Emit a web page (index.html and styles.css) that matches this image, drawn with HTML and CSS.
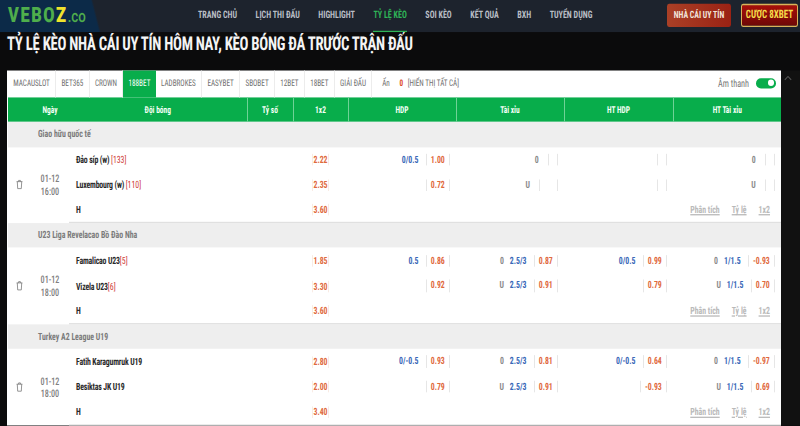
FILE: index.html
```html
<!DOCTYPE html>
<html lang="vi">
<head>
<meta charset="utf-8">
<title>Tỷ lệ kèo</title>
<link rel="stylesheet" href="styles.css">
</head>
<body>
<div class="stage">
<header class="topbar">
  <div class="logo"><span class="logo-main">VEBO</span><span class="logo-z">Z</span><span class="logo-co">.co</span></div>
  <nav class="nav">
    <a>TRANG CHỦ</a><a>LỊCH THI ĐẤU</a><a>HIGHLIGHT</a><a class="on">TỶ LỆ KÈO</a><a>SOI KÈO</a><a>KẾT QUẢ</a><a>BXH</a><a>TUYỂN DỤNG</a>
  </nav>
  <div class="cta">
    <a class="btn btn-a">NHÀ CÁI UY TÍN</a>
    <a class="btn btn-b">CƯỢC 8XBET</a>
  </div>
</header>
<main class="page">
  <h1 class="title">TỶ LỆ KÈO NHÀ CÁI UY TÍN HÔM NAY, KÈO BÓNG ĐÁ TRƯỚC TRẬN ĐẤU</h1>
  <div class="body-row">
    <section class="panel">
      <div class="tabs">
        <a class="tab">MACAUSLOT</a><a class="tab">BET365</a><a class="tab">CROWN</a><a class="tab active">188BET</a><a class="tab">LADBROKES</a><a class="tab">EASYBET</a><a class="tab">SBOBET</a><a class="tab">12BET</a><a class="tab">18BET</a><a class="tab">GIẢI ĐẤU</a>
        <span class="hidden-count">Ẩn <b>0</b> [HIỂN THỊ TẤT CẢ]</span>
        <span class="sound">Âm thanh</span>
        <span class="toggle"><i></i></span>
      </div>
      <table class="odds">
        <colgroup>
          <col class="c-trash"><col class="c-date"><col class="c-team"><col class="c-score"><col class="c-x"><col class="c-g"><col class="c-g"><col class="c-g2"><col class="c-g">
        </colgroup>
        <thead>
          <tr><th></th><th>Ngày</th><th class="sep">Đội bóng</th><th class="sep">Tỷ số</th><th class="sep">1x2</th><th class="sep">HDP</th><th class="sep">Tài xỉu</th><th class="sep">HT HDP</th><th>HT Tài xỉu</th></tr>
        </thead>
        <tbody>
          <tr class="league"><td colspan="9">Giao hữu quốc tế</td></tr>
          <tr>
            <td rowspan="3" class="trash"><svg class="ico" viewBox="0 0 12 14" preserveAspectRatio="none"><path d="M1 3h10M4.5 3V1.2h3V3M2.2 3l.7 9.8h6.2l.7-9.8" fill="none" stroke="#777" stroke-width="1.2"/></svg></td>
            <td rowspan="3" class="date">01-12<br>16:00</td>
            <td class="team">Đảo síp (w) <em>[133]</em></td><td></td><td class="x"><span>2.22</span></td>
            <td><div class="o"><span class="l">0/0.5</span><span class="v">1.00</span></div></td>
            <td><div class="o"><span class="k">0</span><span class="l"></span><span class="v"></span></div></td>
            <td><div class="o"><span class="v e"></span></div></td>
            <td><div class="o"><span class="k">0</span><span class="l"></span><span class="v"></span></div></td>
          </tr>
          <tr>
            <td class="team">Luxembourg (w) <em>[110]</em></td><td></td><td class="x"><span>2.35</span></td>
            <td><div class="o"><span class="v">0.72</span></div></td>
            <td><div class="o"><span class="k">U</span><span class="l"></span><span class="v w"></span></div></td>
            <td><div class="o"><span class="v e"></span></div></td>
            <td><div class="o"><span class="k">U</span><span class="l"></span><span class="v"></span></div></td>
          </tr>
          <tr class="last">
            <td class="team">H</td><td></td><td class="x"><span>3.60</span></td><td></td>
            <td colspan="3" class="links"><a>Phân tích</a><a>Tỷ lệ</a><a>1x2</a></td>
          </tr>
          <tr class="league"><td colspan="9">U23 Liga Revelacao Bồ Đào Nha</td></tr>
          <tr>
            <td rowspan="3" class="trash"><svg class="ico" viewBox="0 0 12 14" preserveAspectRatio="none"><path d="M1 3h10M4.5 3V1.2h3V3M2.2 3l.7 9.8h6.2l.7-9.8" fill="none" stroke="#777" stroke-width="1.2"/></svg></td>
            <td rowspan="3" class="date">01-12<br>18:00</td>
            <td class="team">Famalicao U23<em>[5]</em></td><td></td><td class="x"><span>1.85</span></td>
            <td><div class="o"><span class="l">0.5</span><span class="v">0.86</span></div></td>
            <td><div class="o"><span class="k">0</span><span class="l">2.5/3</span><span class="v">0.87</span></div></td>
            <td><div class="o"><span class="l">0/0.5</span><span class="v">0.99</span></div></td>
            <td><div class="o"><span class="k">0</span><span class="l">1/1.5</span><span class="v">-0.93</span></div></td>
          </tr>
          <tr>
            <td class="team">Vizela U23<em>[6]</em></td><td></td><td class="x"><span>3.30</span></td>
            <td><div class="o"><span class="v">0.92</span></div></td>
            <td><div class="o"><span class="k">U</span><span class="l">2.5/3</span><span class="v">0.91</span></div></td>
            <td><div class="o"><span class="v">0.79</span></div></td>
            <td><div class="o"><span class="k">U</span><span class="l">1/1.5</span><span class="v">0.70</span></div></td>
          </tr>
          <tr class="last">
            <td class="team">H</td><td></td><td class="x"><span>3.60</span></td><td></td>
            <td colspan="3" class="links"><a>Phân tích</a><a>Tỷ lệ</a><a>1x2</a></td>
          </tr>
          <tr class="league"><td colspan="9">Turkey A2 League U19</td></tr>
          <tr>
            <td rowspan="3" class="trash"><svg class="ico" viewBox="0 0 12 14" preserveAspectRatio="none"><path d="M1 3h10M4.5 3V1.2h3V3M2.2 3l.7 9.8h6.2l.7-9.8" fill="none" stroke="#777" stroke-width="1.2"/></svg></td>
            <td rowspan="3" class="date">01-12<br>18:00</td>
            <td class="team">Fatih Karagumruk U19</td><td></td><td class="x"><span>2.80</span></td>
            <td><div class="o"><span class="l">0/-0.5</span><span class="v">0.93</span></div></td>
            <td><div class="o"><span class="k">0</span><span class="l">2.5/3</span><span class="v">0.81</span></div></td>
            <td><div class="o"><span class="l">0/-0.5</span><span class="v">0.64</span></div></td>
            <td><div class="o"><span class="k">0</span><span class="l">1/1.5</span><span class="v">-0.97</span></div></td>
          </tr>
          <tr>
            <td class="team">Besiktas JK U19</td><td></td><td class="x"><span>2.00</span></td>
            <td><div class="o"><span class="v">0.79</span></div></td>
            <td><div class="o"><span class="k">U</span><span class="l">2.5/3</span><span class="v">0.91</span></div></td>
            <td><div class="o"><span class="v">-0.93</span></div></td>
            <td><div class="o"><span class="k">U</span><span class="l">1/1.5</span><span class="v">0.69</span></div></td>
          </tr>
          <tr class="last">
            <td class="team">H</td><td></td><td class="x"><span>3.40</span></td><td></td>
            <td colspan="3" class="links"><a>Phân tích</a><a>Tỷ lệ</a><a>1x2</a></td>
          </tr>
        </tbody>
      </table>
    </section>
    <div class="scroll"><svg class="chev" viewBox="0 0 10 6" preserveAspectRatio="none"><path d="M1 5l4-4 4 4" fill="none" stroke="#555" stroke-width="1.3"/></svg></div>
  </div>
</main>
</div>
</body>
</html>
```
FILE: styles.css
```css
/* The site's typeface is far narrower than any installed family, so the page is
   laid out shorter with small type and stretched upward once.
   --v is one final vertical pixel. */
:root { --v: .78px; }
* { box-sizing: border-box; }
html, body { margin: 0; height: 100%; overflow: hidden; }
body { background: #0b0b0c; font-family: "Roboto", sans-serif; font-stretch: 75%; color: #222; text-rendering: geometricPrecision; }
.stage { width: 800px; height: calc(var(--v) * 426); overflow: hidden; transform: scaleY(1.28205); transform-origin: 0 0; display: flex; flex-direction: column; }

.topbar { flex: none; height: calc(var(--v) * 32); display: flex; align-items: stretch; background: linear-gradient(72deg, #0c2a48 0, #0c2a48 94px, #1d232d 96px, #1d232d 100%); }
.logo { width: 198px; padding: calc(var(--v) * 3) 0 0 8px; font-size: calc(var(--v) * 21); line-height: calc(var(--v) * 25); font-weight: 900; font-stretch: 100%; letter-spacing: 1.6px; white-space: nowrap; }
.logo-main { color: #4fae4c; }
.logo-z { color: #efe32c; }
.logo-co { color: #4fae4c; font-weight: 500; font-size: calc(var(--v) * 17); letter-spacing: 0; }
.nav { display: flex; gap: 18.5px; }
.nav a { height: calc(var(--v) * 32); line-height: calc(var(--v) * 30); font-size: calc(var(--v) * 10.3); color: #b9bec5; font-weight: 700; white-space: nowrap; }
.nav a.on { color: #2fb457; border-bottom: calc(var(--v) * 2) solid #2fb457; }
.cta { margin-left: auto; display: flex; gap: 10px; padding: calc(var(--v) * 4) 2px calc(var(--v) * 5) 0; }
.btn { display: block; height: calc(var(--v) * 23); line-height: calc(var(--v) * 23); text-align: center; font-size: calc(var(--v) * 10); font-weight: 700; border-radius: 2px; white-space: nowrap; }
.btn-a { width: 64px; color: #f2e6dc; background: linear-gradient(90deg, #aa4026, #9a2214); }
.btn-b { width: 57px; line-height: calc(var(--v) * 21.4); font-size: calc(var(--v) * 11.5); color: #f5dc4a; background: linear-gradient(#a80f0a, #6e0806); border: 1px solid #d9b35a; }

.page { flex: 1; display: flex; flex-direction: column; min-height: 0; padding-left: 7px; }
.title { flex: none; margin: 0; height: calc(var(--v) * 39); padding-top: calc(var(--v) * 1); font-size: calc(var(--v) * 19); line-height: calc(var(--v) * 21); font-weight: 700; color: #f4f4f4; letter-spacing: -.29px; white-space: nowrap; }
.body-row { flex: 1; display: flex; min-height: 0; }
.panel { width: 774px; background: #fff; padding-left: 1px; flex: none; }
.scroll { flex: 1; background: #111; padding: calc(var(--v) * 3) 0 0 3px; line-height: 0; }
.chev { width: 8px; height: calc(var(--v) * 5); }

.tabs { height: calc(var(--v) * 26); display: flex; align-items: stretch; font-size: calc(var(--v) * 9.2); color: #6f6f6f; }
.tab { display: flex; align-items: center; justify-content: center; padding: 0 5.3px calc(var(--v) * 2); border-right: 1px solid #ececec; white-space: nowrap; }
.tab.active { background: #08ad4b; color: #fff; border-right: 0; }
.hidden-count { align-self: center; margin: 0 0 calc(var(--v) * 2) 10px; white-space: nowrap; }
.hidden-count b { color: #dc4a2a; margin: 0 3px 0 8px; }
.sound { align-self: center; margin: 0 0 calc(var(--v) * 2) auto; font-size: calc(var(--v) * 10.5); color: #777; }
.toggle { align-self: center; margin: 0 5px calc(var(--v) * 2) 7px; width: 20px; height: calc(var(--v) * 10); border-radius: 5px / calc(var(--v) * 5); background: #08ad4b; display: flex; justify-content: flex-end; align-items: center; padding-right: 2px; }
.toggle i { width: 6px; height: calc(var(--v) * 6); border-radius: 50%; background: #fff; }

.odds { width: 773px; table-layout: fixed; border-collapse: collapse; font-size: calc(var(--v) * 10); }
.c-trash { width: 23px; } .c-date { width: 38px; } .c-team { width: 178px; } .c-score { width: 46px; } .c-x { width: 55px; } .c-g { width: 108px; } .c-g2 { width: 109px; }
.odds thead tr { background: #08ad4b; }
.odds th { height: calc(var(--v) * 25); color: #f3fff5; font-size: calc(var(--v) * 9.5); font-weight: 700; padding: 0; }
.odds th.sep { border-right: 1px solid #6fd296; }
.odds td { padding: 0; height: calc(var(--v) * 25.33); }
.odds .league td { height: calc(var(--v) * 25); background: #eeeeee; color: #7b7b7b; font-weight: 700; padding-left: 30px; }
.last td { border-bottom: 1px solid #e0e0e0; }
.trash { text-align: center; line-height: 0; }
.ico { width: 7px; height: calc(var(--v) * 10); }
.date { text-align: center; color: #808080; font-size: calc(var(--v) * 10.5); line-height: calc(var(--v) * 13); font-weight: 500; }
.odds .team { font-weight: 700; color: #2a2a2a; padding-left: 7px; white-space: nowrap; letter-spacing: -.16px; }
.team em { font-style: normal; font-weight: 400; color: #d0413c; font-size: calc(var(--v) * 10); letter-spacing: 0; }
.x { text-align: center; color: #df6a3e; font-weight: 700; }
.x span { padding: 0 .5px; border: solid #f9ebe4; border-width: 0 1px; }
.o { display: flex; justify-content: flex-end; align-items: center; height: calc(var(--v) * 12); margin-right: 6px; font-weight: 700; }
.k { color: #8a8a8a; margin-right: 6px; }
.l { color: #3a68b8; padding-right: 7px; }
.l:empty { padding-right: 3px; }
.v { color: #df6a3e; padding: 0 4.2px; border: solid #e6e6e6; border-width: 0 1px; height: calc(var(--v) * 12); line-height: calc(var(--v) * 12); min-width: 10px; }
.v.w { width: 19px; }
.odds .links { text-align: right; padding-right: 11px; }
.links a { color: #b9b9b9; text-decoration: underline; margin-left: 12px; font-weight: 700; }
```
